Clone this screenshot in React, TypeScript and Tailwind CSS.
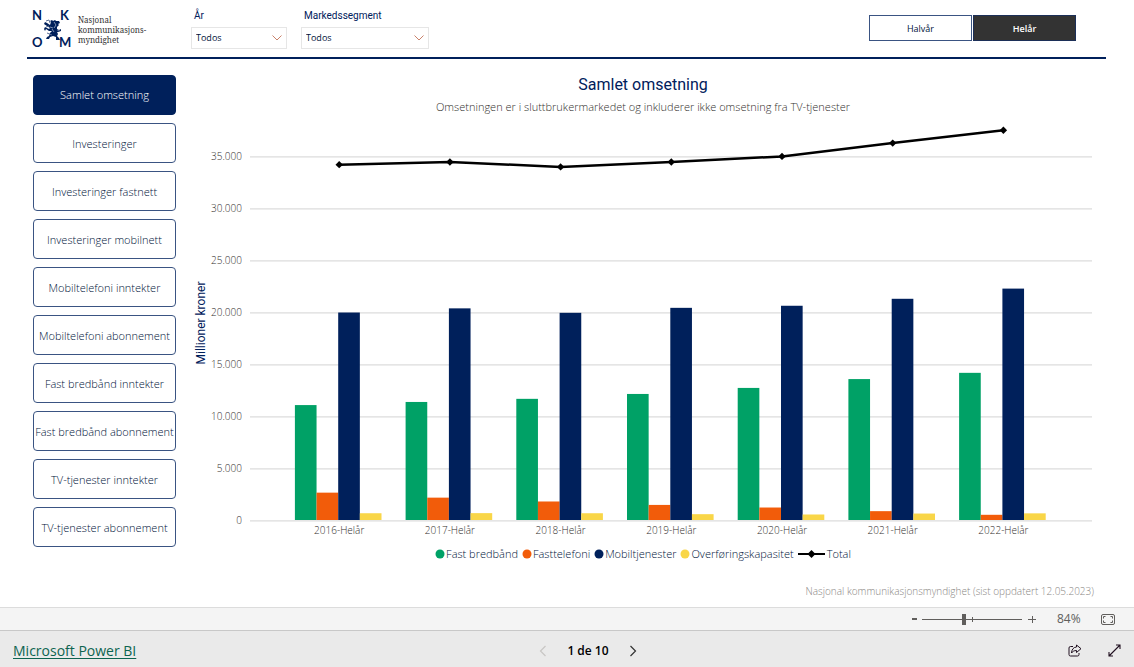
import { useState } from "react";

const sections = [
  "Samlet omsetning",
  "Investeringer",
  "Investeringer fastnett",
  "Investeringer mobilnett",
  "Mobiltelefoni inntekter",
  "Mobiltelefoni abonnement",
  "Fast bredbånd inntekter",
  "Fast bredbånd abonnement",
  "TV-tjenester inntekter",
  "TV-tjenester abonnement",
];

const series = [
  { name: "Fast bredbånd", color: "#00a166" },
  { name: "Fasttelefoni", color: "#f25c0a" },
  { name: "Mobiltjenester", color: "#00205b" },
  { name: "Overføringskapasitet", color: "#f9d648" },
];

const years = [
  { label: "2016-Helår", bars: [11050, 2630, 19950, 650], total: 34170 },
  { label: "2017-Helår", bars: [11350, 2150, 20350, 660], total: 34430 },
  { label: "2018-Helår", bars: [11650, 1780, 19920, 650], total: 33950 },
  { label: "2019-Helår", bars: [12120, 1450, 20400, 560], total: 34430 },
  { label: "2020-Helår", bars: [12700, 1200, 20600, 530], total: 34960 },
  { label: "2021-Helår", bars: [13550, 850, 21270, 620], total: 36240 },
  { label: "2022-Helår", bars: [14150, 500, 22250, 640], total: 37470 },
];

const ticks = [0, 5000, 10000, 15000, 20000, 25000, 30000, 35000];

const BASE = 400;
const PITCH = 110.7;
const BAR = 21.65;
const yOf = (v: number) => BASE - (v * 52) / 5000;
const centerOf = (i: number) => 159.2 + i * PITCH;
const formatTick = (v: number) => (v === 0 ? "0" : `${v / 1000}.000`);

function Logo() {
  return (
    <div className="flex items-start gap-[6px]">
      <svg viewBox="0 0 40 40" className="h-10 w-10 overflow-visible" role="img" aria-label="Nkom">
        <g fill="#00205b" className="font-['Lato'] text-[13px] font-bold">
          <text x="0" y="12">N</text>
          <text x="28" y="12">K</text>
          <text x="0" y="39">O</text>
          <text x="27" y="39">M</text>
        </g>
        <path
          d="M21 13l2-1 1 1 3 0 1 2-2 1 1 1-2 2 0 2 2 1 2-1 0 2-3 1-1 0 1 2-1 2 2 2 1 2-4 0 0-3-3-1-3 1-1 2-3 0 1-2 2-1 1-3 2-2-3 0-3-2-1 2-1-2 1-2 2 1 2 1 1-1-3-2-3-2 1-2 2 1 3 2 1-3-1-1 2-1z"
          fill="#00205b"
        />
        <path
          d="M14 13l3-1 1 3M15 25l5 2M25 22l3 1M14 19l3-1"
          fill="none"
          stroke="#5b6f96"
        />
        <path d="M22 14l2 3-2 3M20 21l2 3M18 19l3 1" fill="none" stroke="#b9c3d6" strokeWidth=".7" />
      </svg>
      <p className="pt-[7px] font-['Noto_Serif','DejaVu_Serif',serif] text-[8px] leading-[10px] text-[#333]">
        Nasjonal
        <br />
        kommunikasjons-
        <br />
        myndighet
      </p>
    </div>
  );
}

function Filter({ id, label, width }: { id: string; label: string; width: string }) {
  return (
    <div className={width}>
      <label htmlFor={id} className="block px-[3px] font-['Roboto'] text-[10px] leading-4 text-[#00205b]">
        {label}
      </label>
      <div className="relative mt-[3px]">
        <select
          id={id}
          className="block h-[22px] w-full appearance-none border border-[#e6e6e6] bg-white px-1 text-[9px] text-[#00133a]"
        >
          <option>Todos</option>
        </select>
        <svg viewBox="0 0 10 6" className="pointer-events-none absolute top-2 right-[5px] h-[6px] w-[10px]">
          <path d="M.5.5L5 5 9.500.5" fill="none" stroke="#c9826b" />
        </svg>
      </div>
    </div>
  );
}

function Chart() {
  return (
    <svg
      viewBox="0 0 926 420"
      className="block w-full"
      role="img"
      aria-label="Samlet omsetning per år"
    >
      <text
        transform="translate(25 203) rotate(-90)"
        textAnchor="middle"
        fill="#00205b"
        className="font-['Roboto'] text-[12px]"
      >
        Millioner kroner
      </text>
      {ticks.map((t) => (
        <g key={t}>
          <line x1="70" x2="912" y1={yOf(t) + 0.8} y2={yOf(t) + 0.8} stroke="#dcdcdc" strokeWidth="1.3" />
          <text x="62" y={yOf(t) + 4} textAnchor="end" fill="#33302e" className="text-[10px] font-[330]">
            {formatTick(t)}
          </text>
        </g>
      ))}
      {years.map((year, i) => (
        <g key={year.label}>
          {year.bars.map((v, j) => (
            <rect
              key={series[j].name}
              x={centerOf(i) + (j - 2) * BAR - 1}
              y={yOf(v)}
              width={BAR}
              height={BASE - yOf(v)}
              fill={series[j].color}
            />
          ))}
          <text x={centerOf(i)} y="414" textAnchor="middle" fill="#33302e" className="text-[10px] font-[330]">
            {year.label}
          </text>
        </g>
      ))}
      <polyline
        points={years.map((y, i) => `${centerOf(i)},${yOf(y.total)}`).join(" ")}
        fill="none"
        stroke="#000"
        strokeWidth="2.500"
        strokeLinejoin="round"
      />
      {years.map((y, i) => (
        <path
          key={y.label}
          d="M0-3.700L3.700 0 0 3.700-3.700 0z"
          transform={`translate(${centerOf(i)} ${yOf(y.total)})`}
        />
      ))}
    </svg>
  );
}

export default function App() {
  const [active, setActive] = useState(sections[0]);
  const [zoom, setZoom] = useState(84);

  return (
    <div className="flex min-h-screen flex-col bg-white font-['Open_Sans','Noto_Sans',sans-serif]">
      <header className="mr-7 ml-[27px] flex h-[59px] items-start border-b-2 border-[#00205b] pt-2 pl-[5px]">
        <div className="w-[159px]">
          <Logo />
        </div>
        <div className="flex gap-[14px]">
          <Filter id="year" label="År" width="w-24" />
          <Filter id="segment" label="Markedssegment" width="w-32" />
        </div>
        <div className="mt-[7px] mr-[30px] ml-auto flex gap-px text-[9px]">
          <button className="h-[26px] w-[103px] border border-[#3a5482] bg-white pt-px text-[#00133a]">Halvår</button>
          <button className="h-[26px] w-[103px] border border-[#1c2f58] bg-[#333] pt-px font-semibold text-white">Helår</button>
        </div>
      </header>

      <main className="mr-7 ml-[33px] flex flex-1 gap-1 pt-4">
        <nav className="flex w-[143px] shrink-0 flex-col gap-2">
          {sections.map((s) => (
            <button
              key={s}
              onClick={() => setActive(s)}
              className={
                "h-10 rounded-[4px] border text-[11px] font-[330] whitespace-nowrap " +
                (s === active
                  ? "border-[#00205b] bg-[#00205b] text-white"
                  : "border-[#3a5482] bg-white pt-[2px] text-[#00133a]")
              }
            >
              {s}
            </button>
          ))}
        </nav>

        <section className="flex min-w-0 flex-1 flex-col">
          <h1 className="text-center font-['Roboto'] text-[16px] leading-5 text-[#00205b]">Samlet omsetning</h1>
          <p className="h-[25px] pt-1 text-center text-[11px] leading-4 font-[330] text-[#33302e]">
            Omsetningen er i sluttbrukermarkedet og inkluderer ikke omsetning fra TV-tjenester
          </p>
          <Chart />
          <ul className="mt-[6px] flex justify-center gap-1 text-[11px] leading-4 font-[330] text-[#00133a]">
            {series.map((s) => (
              <li key={s.name} className="flex items-center gap-px">
                <svg viewBox="0 0 10 10" className="h-[10px] w-[10px]">
                  <circle cx="5" cy="5" r="4.500" fill={s.color} />
                </svg>
                {s.name}
              </li>
            ))}
            <li className="flex items-center gap-[2px]">
              <svg viewBox="0 0 27 10" className="h-[10px] w-[27px]">
                <path d="M0 5h27" stroke="#000" strokeWidth="2" />
                <path d="M13.500 1l4 4-4 4-4-4z" />
              </svg>
              Total
            </li>
          </ul>
          <p className="mt-auto mr-3 pb-2 text-right text-[10px] leading-4 font-light text-[#8a8784]">
            Nasjonal kommunikasjonsmyndighet (sist oppdatert 12.05.2023)
          </p>
        </section>
      </main>

      <div className="flex h-[23px] items-center justify-end border-t border-[#dcdcdc] bg-[#f4f4f4] pr-[19px] text-[#605e5c]">
        <button aria-label="Zoom ut" className="flex h-4 w-4 items-center justify-center">
          <svg viewBox="0 0 10 10" className="h-[10px] w-[10px]">
            <path d="M3 5h5" stroke="currentColor" strokeWidth="2" />
          </svg>
        </button>
        <div className="relative flex h-4 w-[100px] items-center">
          <span className="absolute top-[6px] left-[50px] h-[5px] w-px bg-[#605e5c]" />
          <input
            type="range"
            aria-label="Zoom"
            min={0}
            max={200}
            value={zoom}
            onChange={(e) => setZoom(Number(e.target.value))}
            className="relative h-[11px] w-full appearance-none bg-transparent [&::-webkit-slider-runnable-track]:h-px [&::-webkit-slider-runnable-track]:bg-[#605e5c] [&::-webkit-slider-thumb]:-mt-[5px] [&::-webkit-slider-thumb]:h-[11px] [&::-webkit-slider-thumb]:w-1 [&::-webkit-slider-thumb]:appearance-none [&::-webkit-slider-thumb]:bg-[#605e5c]"
          />
        </div>
        <button aria-label="Zoom inn" className="ml-[5px] flex h-4 w-[10px] items-center justify-center">
          <svg viewBox="0 0 10 10" className="h-[10px] w-[10px]">
            <path d="M1 5.500h8M5.500 2v7" fill="none" stroke="currentColor" />
          </svg>
        </button>
        <span className="ml-5 w-8 text-[12px] leading-4">{zoom}%</span>
        <button aria-label="Tilpass til side" className="ml-3">
          <svg viewBox="0 0 14 11" className="h-[11px] w-[14px]" fill="none" stroke="currentColor">
            <rect x=".5" y=".5" width="13" height="10" rx="1.500" />
            <path d="M2.500 4.500v-2h2M9.500 2.500h2v2M11.500 6.500v2h-2M4.500 8.500h-2v-2" />
          </svg>
        </button>
      </div>

      <footer className="grid h-[37px] grid-cols-3 items-center border-t border-[#c8c8c8] bg-[#eaeaea] px-[13px] pt-[3px]">
        <a href="#" className="justify-self-start text-[14px] leading-5 text-[#0d6450] underline underline-offset-2">
          Microsoft Power BI
        </a>
        <div className="flex items-center justify-center gap-[20px] pl-[42px]">
          <button aria-label="Forrige side" className="text-[#c8c6c4]">
            <svg viewBox="0 0 8 12" className="h-3 w-2">
              <path d="M6.500 1L1.500 6l5 5" fill="none" stroke="currentColor" strokeWidth="1.200" />
            </svg>
          </button>
          <span className="text-[12px] leading-4 font-semibold text-black">1 de 10</span>
          <button aria-label="Neste side" className="text-[#333]">
            <svg viewBox="0 0 8 12" className="h-3 w-2">
              <path d="M1.500 1l5 5-5 5" fill="none" stroke="currentColor" strokeWidth="1.200" />
            </svg>
          </button>
        </div>
        <div className="flex items-center gap-[26px] justify-self-end text-[#201020]">
          <button aria-label="Del">
            <svg viewBox="0 0 14 13" className="h-[13px] w-[14px]" fill="none" stroke="currentColor">
              <path d="M5 2.500H2.500a1.500 1.500 0 0 0-1.500 1.500v6.500A1.500 1.500 0 0 0 2.500 12h7a1.500 1.500 0 0 0 1.500-1.500V9" />
              <path d="M8.500 1l4.500 3.700-4.500 3.800V6.500C6 6.500 4.500 7.500 3.500 9 3.700 5.500 5.500 3.200 8.500 3z" strokeLinejoin="round" />
            </svg>
          </button>
          <button aria-label="Fullskjerm">
            <svg viewBox="0 0 13 13" className="h-[13px] w-[13px]" fill="none" stroke="currentColor" strokeWidth="1.100">
              <path d="M8 1h4v4M12 1L1 12M1 8v4h4" />
            </svg>
          </button>
        </div>
      </footer>
    </div>
  );
}
